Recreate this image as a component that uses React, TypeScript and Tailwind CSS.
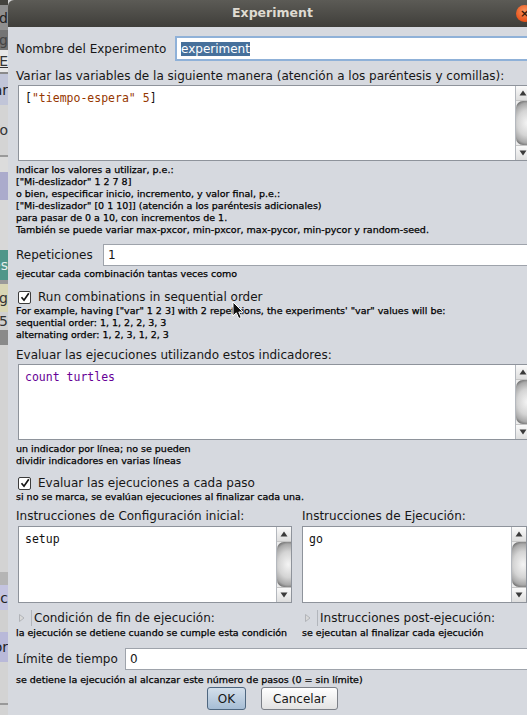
import React from "react";

function Arrow({ down }: { down?: boolean }) {
  return (
    <svg width="8" height="6" viewBox="0 0 8 6">
      {down ? (
        <polygon points="0.5,0.5 7.5,0.5 4,5.5" fill="#3a3a3a" />
      ) : (
        <polygon points="4,0.5 7.5,5.5 0.5,5.5" fill="#3a3a3a" />
      )}
    </svg>
  );
}

function ScrollBar() {
  return (
    <div className="w-[15px] flex flex-col border-l border-[#b4b8be] bg-[#ececec]">
      <div className="h-[15px] flex items-center justify-center bg-[linear-gradient(180deg,#fafafa,#dedede)] border-b border-[#c6c6c6]">
        <Arrow />
      </div>
      <div className="flex-1 rounded-l-[7px] bg-[radial-gradient(ellipse_140%_58%_at_80%_50%,#f4f4f4_0%,#d4d4d4_50%,#a9a9a9_78%,#4a4a4a_100%)]" />
      <div className="h-[15px] flex items-center justify-center bg-[linear-gradient(180deg,#fafafa,#dedede)] border-t border-[#c6c6c6]">
        <Arrow down />
      </div>
    </div>
  );
}

function TextArea({ children, className }: { children: React.ReactNode; className: string }) {
  return (
    <div className={"flex border border-[#8e939b] bg-white " + className}>
      <div className="flex-1 pl-[6px] pt-[5px] font-['DejaVu_Sans_Mono',monospace] text-[11.5px] leading-[14px] text-[#111]">
        {children}
      </div>
      <ScrollBar />
    </div>
  );
}

function Check() {
  return (
    <div className="w-[13px] h-[13px] rounded-[2px] border border-[#3c3c3c] bg-white flex items-center justify-center">
      <svg width="10" height="10" viewBox="0 0 10 10">
        <path d="M1.5 5.2 L4 8.2 L8.8 1.2" stroke="#151515" strokeWidth="1.7" fill="none" strokeLinejoin="miter" />
      </svg>
    </div>
  );
}

function Expander() {
  return (
    <div className="flex items-center h-[16px]">
      <svg width="8" height="10" viewBox="0 0 8 10" className="ml-[2px]">
        <polygon points="1.5,1.5 6,5 1.5,8.5" fill="#d9d9d9" stroke="#a8abb0" strokeWidth="0.8" />
      </svg>
      <div className="ml-[5px] w-[1px] h-[16px] bg-[#b2b6bc]" />
    </div>
  );
}

function Small({ children, className }: { children: React.ReactNode; className?: string }) {
  return (
    <div className={"text-[9.5px] leading-[12px] text-black whitespace-nowrap [-webkit-text-stroke:0.25px_#000] " + (className ?? "")}>{children}</div>
  );
}

function Strip() {
  const seg = "flex justify-end items-center overflow-hidden whitespace-nowrap text-[14px] leading-none";
  return (
    <div className="w-[8px] shrink-0 h-[715px] flex flex-col overflow-hidden">
      <div className="h-[5px] bg-[#45443f]" />
      <div className={seg + " h-[25px] bg-[#8f8f8f] text-[#222]"}>Md</div>
      <div className={seg + " h-[20px] bg-[#747474] text-[#444]"}>ig</div>
      <div className={seg + " h-[22px] bg-[#e8e8e8] text-[#333] underline"}>E</div>
      <div className="h-[2px] bg-[#8a8a8a]" />
      <div className={seg + " h-[31px] bg-[#c1c5d8] text-[#222]"}>ar</div>
      <div className={seg + " h-[50px] bg-[#d4d4d4] text-[#333]"}>o</div>
      <div className="h-[2px] bg-[#9a9a9a]" />
      <div className="h-[15px] bg-[#dcdcdc]" />
      <div className="h-[28px] bg-[#ababcc]" />
      <div className="h-[50px] bg-[#d8d8d8]" />
      <div className={seg + " h-[30px] bg-[#4f968a] text-[#e8f0ee]"}>es</div>
      <div className="h-[4px] bg-[#9a9a9a]" />
      <div className={seg + " h-[28px] bg-[#d8d6b4] text-[#333]"}>ng</div>
      <div className={seg + " h-[18px] bg-[#d0d0d0] text-[#333] text-[11px]"}>5</div>
      <div className="h-[15px] bg-[#8a8a8a]" />
      <div className="h-[227px] bg-[#d3d3d3]" />
      <div className="h-[13px] bg-[#b5b5b5]" />
      <div className={seg + " h-[25px] bg-[#c4c4e0] text-[#222]"}>c</div>
      <div className="h-[22px] bg-[#d0d0d0]" />
      <div className={seg + " h-[30px] bg-[#b9b9d9] text-[#222]"}>or</div>
      <div className="h-[41px] bg-[#d3d3d3]" />
      <div className="h-[2px] bg-[#999]" />
      <div className="flex-1 bg-[#d3d3d3]" />
    </div>
  );
}

export default function App() {
  return (
    <div className="relative w-[527px] h-[715px] overflow-hidden flex bg-[#d3d3d3] font-['DejaVu_Sans',sans-serif] text-[12px] text-[#161616]">
      <Strip />
      <div className="w-[529px] shrink-0 flex flex-col">
        {/* title bar */}
        <div className="relative h-[27px] rounded-tl-[6px] bg-[linear-gradient(180deg,#5c5b56,#3f3e3a)] flex items-center justify-center">
          <span className="font-bold text-[12.5px] text-[#dfdbd2]">Experiment</span>
          <div className="absolute right-[4px] top-[5px] w-[17px] h-[17px] rounded-full bg-[radial-gradient(circle_at_50%_35%,#f7955f,#e9561e_70%,#b9400f)] flex items-center justify-center text-[#3a1a0a] text-[11px] font-bold leading-none">
            ×
          </div>
        </div>
        {/* body */}
        <div className="flex-1 flex flex-col bg-[#d6d9df] pl-[8px] pr-[6px]">
          <div className="mt-[9px] h-[25px] flex items-center">
            <span className="w-[159px] shrink-0">Nombre del Experimento</span>
            <div className="flex-1 h-full bg-white border-2 border-[#8fb1d8] flex items-center pl-[4px]">
              <span className="bg-[#46709b] text-white leading-[14px]">experiment</span>
            </div>
          </div>

          <div className="mt-[7px] h-[16px] leading-[16px] whitespace-nowrap">
            Variar las variables de la siguiente manera (atención a los paréntesis y comillas):
          </div>
          <TextArea className="mt-[1px] ml-[2px] h-[76px]">
            <span>[</span>
            <span className="text-[#963700]">"tiempo-espera"</span>
            <span> </span>
            <span className="text-[#963700]">5</span>
            <span>]</span>
          </TextArea>

          <div className="mt-[3px]">
            <Small>Indicar los valores a utilizar, p.e.:</Small>
            <Small>["Mi-deslizador" 1 2 7 8]</Small>
            <Small>o bien, especificar inicio, incremento, y valor final, p.e.:</Small>
            <Small>["Mi-deslizador" [0 1 10]] (atención a los paréntesis adicionales)</Small>
            <Small>para pasar de 0 a 10, con incrementos de 1.</Small>
            <Small>También se puede variar max-pxcor, min-pxcor, max-pycor, min-pycor y random-seed.</Small>
          </div>

          <div className="mt-[8px] h-[22px] flex items-center">
            <span className="w-[87px] shrink-0">Repeticiones</span>
            <div className="flex-1 h-full bg-white border border-[#9ea3ab] flex items-center pl-[4px]">1</div>
          </div>
          <Small className="mt-[2px]">ejecutar cada combinación tantas veces como</Small>

          <div className="mt-[9px] h-[16px] flex items-center">
            <div className="ml-[2px]"><Check /></div>
            <span className="ml-[7px]">Run combinations in sequential order</span>
          </div>
          <Small>For example, having ["var" 1 2 3] with 2 repetitions, the experiments' "var" values will be:</Small>
          <Small>sequential order: 1, 1, 2, 2, 3, 3</Small>
          <Small>alternating order: 1, 2, 3, 1, 2, 3</Small>

          <div className="mt-[6px] h-[16px] leading-[16px] whitespace-nowrap">
            Evaluar las ejecuciones utilizando estos indicadores:
          </div>
          <TextArea className="mt-[1px] ml-[2px] h-[76px]">
            <span className="text-[#660096]">count turtles</span>
          </TextArea>
          <div className="mt-[3px]">
            <Small>un indicador por línea; no se pueden</Small>
            <Small>dividir indicadores en varias líneas</Small>
          </div>

          <div className="mt-[8px] h-[16px] flex items-center">
            <div className="ml-[2px]"><Check /></div>
            <span className="ml-[7px]">Evaluar las ejecuciones a cada paso</span>
          </div>
          <Small>si no se marca, se evalúan ejecuciones al finalizar cada una.</Small>

          <div className="mt-[5px] flex">
            <div className="w-[286px] shrink-0 flex flex-col">
              <div className="h-[16px] leading-[16px] whitespace-nowrap">Instrucciones de Configuración inicial:</div>
              <TextArea className="mt-[2px] ml-[2px] w-[274px] h-[77px]">setup</TextArea>
              <div className="mt-[7px] h-[16px] flex items-center">
                <Expander />
                <span className="ml-[2px] leading-[16px]">Condición de fin de ejecución:</span>
              </div>
              <Small className="mt-[1px]">la ejecución se detiene cuando se cumple esta condición</Small>
            </div>
            <div className="flex flex-col">
              <div className="h-[16px] leading-[16px] whitespace-nowrap">Instrucciones de Ejecución:</div>
              <TextArea className="mt-[2px] w-[225px] h-[77px]">go</TextArea>
              <div className="mt-[7px] h-[16px] flex items-center">
                <Expander />
                <span className="ml-[2px] leading-[16px]">Instrucciones post-ejecución:</span>
              </div>
              <Small className="mt-[1px]">se ejecutan al finalizar cada ejecución</Small>
            </div>
          </div>

          <div className="mt-[9px] h-[22px] flex items-center">
            <span className="w-[109px] shrink-0">Límite de tiempo</span>
            <div className="flex-1 h-full bg-white border border-[#9ea3ab] flex items-center pl-[4px]">0</div>
          </div>
          <Small className="mt-[4px]">se detiene la ejecución al alcanzar este número de pasos (0 = sin límite)</Small>

          <div className="mt-[1px] mr-[2px] flex justify-center gap-[15px]">
            <div className="w-[39px] h-[23px] rounded-[3px] border border-[#4f6780] bg-[linear-gradient(180deg,#d3dfeb,#a6bdd5)] flex items-center justify-center">
              OK
            </div>
            <div className="w-[77px] h-[23px] rounded-[3px] border border-[#7c8087] bg-[linear-gradient(180deg,#ffffff,#e2e2e2)] flex items-center justify-center">
              Cancelar
            </div>
          </div>
        </div>
      </div>

      {/* mouse pointer */}
      <svg className="absolute left-[232px] top-[301px]" width="13" height="19" viewBox="0 0 13 19">
        <path d="M1 1 L1 15 L4.3 11.8 L6.8 17.5 L9.2 16.5 L6.8 11 L11 11 Z" fill="#111" stroke="#fff" strokeWidth="1" strokeLinejoin="round" />
      </svg>
    </div>
  );
}
